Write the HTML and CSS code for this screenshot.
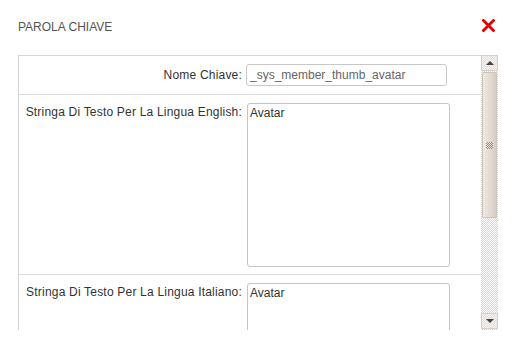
FILE: index.html
```html
<!DOCTYPE html>
<html>
<head>
<meta charset="utf-8">
<link rel="stylesheet" href="styles.css">
</head>
<body>
<div class="dialog">
  <div class="header">
    <span class="title">PAROLA CHIAVE</span>
    <svg class="close" width="13" height="13" viewBox="0 0 13 13">
      <path d="M1.5 1.5 L11.5 11.5 M11.5 1.5 L1.5 11.5" stroke="#e00000" stroke-width="2.8" stroke-linecap="square"/>
    </svg>
  </div>
  <div class="box">
    <div class="content">
      <div class="row row-input">
        <label class="label">Nome Chiave:</label>
        <input class="field" type="text" value="_sys_member_thumb_avatar">
      </div>
      <div class="row row-text">
        <label class="label">Stringa Di Testo Per La Lingua English:</label>
        <textarea class="area">Avatar</textarea>
      </div>
      <div class="row row-text">
        <label class="label">Stringa Di Testo Per La Lingua Italiano:</label>
        <textarea class="area">Avatar</textarea>
      </div>
    </div>
    <div class="scrollbar">
      <div class="btn up"><span class="tri-up"></span></div>
      <div class="thumb"><span class="grip"></span></div>
      <div class="track"></div>
      <div class="btn down"><span class="tri-down"></span></div>
    </div>
  </div>
</div>
</body>
</html>
```

FILE: styles.css
```css
html, body {
  margin: 0;
  padding: 0;
  background: #fff;
}
body {
  font-family: "Liberation Sans", Arial, sans-serif;
  font-size: 12px;
  color: #333;
}
.dialog {
  width: 514px;
  height: 342px;
  overflow: hidden;
}
.header {
  display: flex;
  align-items: flex-start;
  justify-content: space-between;
  padding: 19px 19px 0 18px;
  height: 55px;
  box-sizing: border-box;
}
.title {
  color: #555;
  font-size: 12px;
  line-height: 14px;
  padding-top: 1px;
}
.close {
  display: block;
  margin-top: 0;
}
.box {
  display: flex;
  margin-left: 18px;
  width: 480px;
  height: 275px;
}
.content {
  flex: 1;
  border-left: 1px solid #d4d4d4;
  border-top: 1px solid #d4d4d4;
  overflow: hidden;
}
.row {
  display: flex;
  border-bottom: 1px solid #dcdcdc;
  padding: 8px 0 7px 0;
}
.row-input {
  align-items: center;
  padding: 8px 0 8px 0;
}
.row-text {
  align-items: flex-start;
}
.label {
  width: 223px;
  text-align: right;
  line-height: 14px;
  color: #333;
  letter-spacing: 0.2px;
  flex: none;
}
.row-text .label {
  padding-top: 2px;
}
.field {
  margin: 0 0 0 4px;
  width: 201px;
  height: 22px;
  box-sizing: border-box;
  border: 1px solid #c8c8c8;
  border-radius: 3px;
  padding: 0 3px;
  font-family: "Liberation Sans", Arial, sans-serif;
  font-size: 12px;
  color: #666;
  outline: none;
}
.area {
  margin: 0 0 0 5px;
  width: 203px;
  height: 164px;
  box-sizing: border-box;
  border: 1px solid #c4c4c4;
  border-radius: 3px;
  padding: 2px 2px;
  font-family: "Liberation Sans", Arial, sans-serif;
  font-size: 12px;
  line-height: 14px;
  color: #333;
  resize: none;
  outline: none;
  overflow: hidden;
}
.scrollbar {
  width: 17px;
  flex: none;
  display: flex;
  flex-direction: column;
  background: repeating-conic-gradient(#ddd5cd 0 25%, #ffffff 0 50%) 0 0 / 2px 2px;
}
.btn {
  height: 16px;
  flex: none;
  box-sizing: border-box;
  border: 1px solid #d8d0c8;
  background: repeating-conic-gradient(#e4ddd6 0 25%, #f7f4f1 0 50%) 0 0 / 2px 2px;
  display: flex;
  align-items: center;
  justify-content: center;
}
.tri-up {
  width: 0;
  height: 0;
  border-left: 4px solid transparent;
  border-right: 4px solid transparent;
  border-bottom: 4px solid #444;
}
.tri-down {
  width: 0;
  height: 0;
  border-left: 4px solid transparent;
  border-right: 4px solid transparent;
  border-top: 4px solid #444;
}
.up {
  margin-bottom: 1px;
}
.thumb {
  height: 146px;
  flex: none;
  box-sizing: border-box;
  margin: 0 1px;
  border: 1px solid #cdc3b9;
  border-radius: 1px;
  background: linear-gradient(to right, #efe9e3, #e2d9d0 60%, #d6ccc2);
  display: flex;
  align-items: center;
  justify-content: center;
}
.grip {
  width: 7px;
  height: 7px;
  background: repeating-conic-gradient(#9a928a 0 25%, transparent 0 50%) 0 0 / 2px 2px;
}
.track {
  flex: 1;
}
.down {
  margin-bottom: 1px;
}
```
